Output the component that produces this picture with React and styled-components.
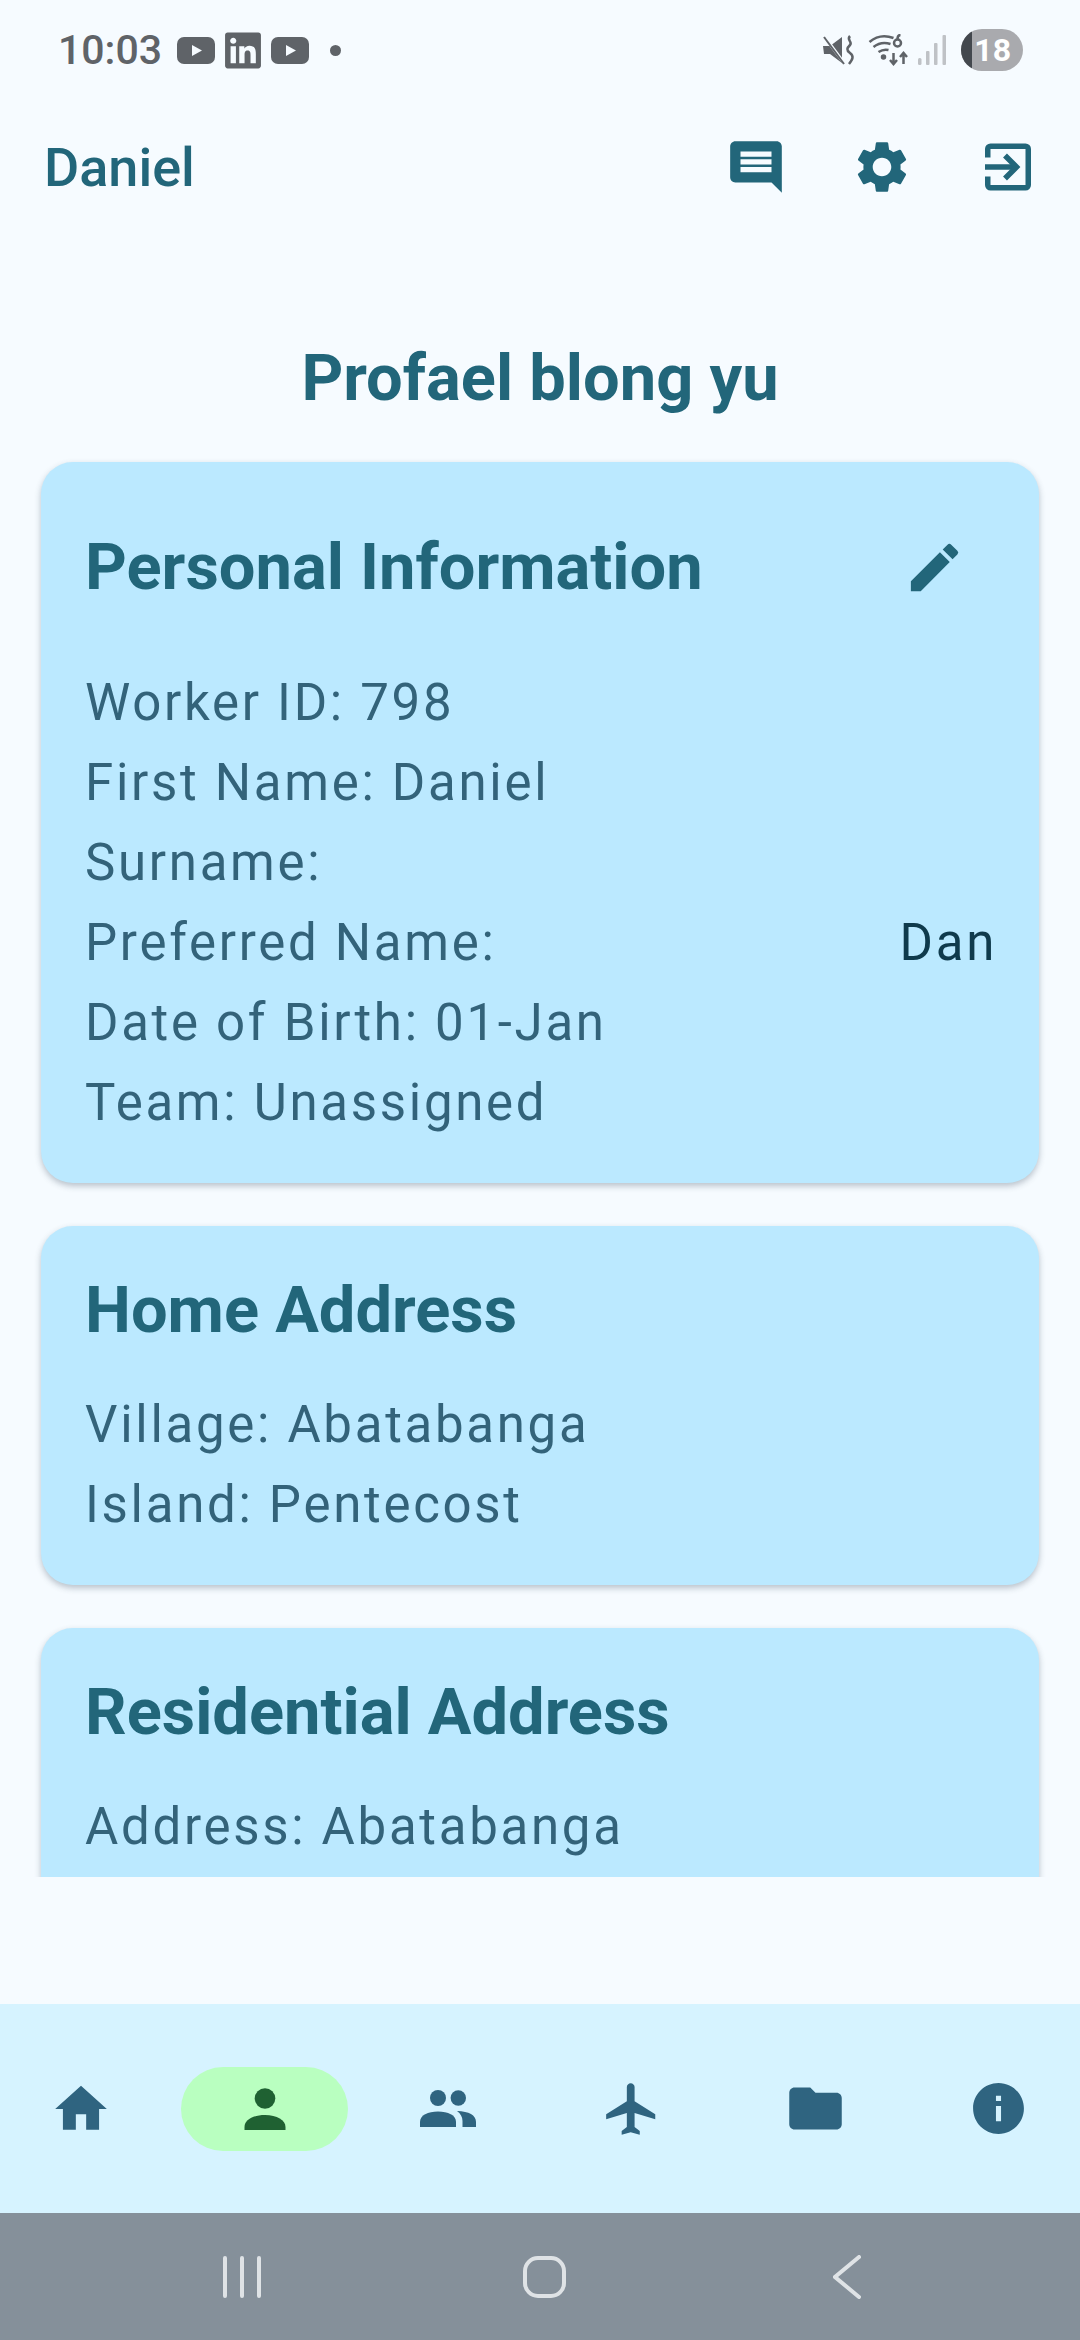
import styled, { createGlobalStyle } from "styled-components";
import { MdComment, MdSettings, MdEdit, MdHome, MdFlight, MdFolder, MdInfo } from "react-icons/md";
import { FaLinkedin } from "react-icons/fa";

const GlobalStyle = createGlobalStyle`
  html, body {
    margin: 0;
    padding: 0;
    background: #f6fbff;
    font-family: Roboto, "Liberation Sans", sans-serif;
  }
`;

const Page = styled.div`
  width: 1080px;
  height: 2340px;
  display: flex;
  flex-direction: column;
  background: #f6fbff;
  overflow: hidden;
`;

const StatusBar = styled.div`
  height: 100px;
  flex: none;
  display: flex;
  align-items: center;
  justify-content: space-between;
  padding: 0 57px 0 58px;
  color: #5f6368;
`;

const StatusGroup = styled.div`
  display: flex;
  align-items: center;
  gap: ${(p) => p.$gap}px;
`;

const Time = styled.span`
  font-size: 41px;
  font-weight: 500;
  margin-right: 5px;
`;

const LinkedinIcon = styled(FaLinkedin)`
  width: 36px;
  height: 41px;
`;

const Dot = styled.span`
  width: 11px;
  height: 11px;
  border-radius: 50%;
  background: #5f6368;
  margin-left: 11px;
`;

const Battery = styled.div`
  position: relative;
  width: 62px;
  height: 42px;
  margin-left: 6px;
  border-radius: 21px;
  overflow: hidden;
  background: #a9aaae;
  color: #fff;
  font-size: 32px;
  font-weight: 700;
  line-height: 42px;
  text-align: right;
  padding-right: 12px;
  box-sizing: border-box;
`;

const BatteryLevel = styled.span`
  position: absolute;
  left: 0;
  top: 0;
  bottom: 0;
  width: 11px;
  background: #43484e;
`;

const Header = styled.div`
  height: 134px;
  flex: none;
  display: flex;
  align-items: center;
  justify-content: space-between;
  padding: 0 41px 0 44px;
  color: #22667a;
`;

const UserName = styled.div`
  font-size: 54px;
  font-weight: 500;
`;

const HeaderActions = styled.div`
  display: flex;
  align-items: center;
  gap: 64px;
  & > svg {
    width: 62px;
    height: 62px;
  }
`;

const ExitIcon = styled.svg`
  fill: none;
  stroke: currentColor;
  stroke-width: 5.5;
`;

const PageTitle = styled.h1`
  height: 207px;
  flex: none;
  margin: 0;
  padding-top: 104px;
  box-sizing: border-box;
  text-align: center;
  color: #22667a;
  font-size: 65px;
  font-weight: 700;
  line-height: 80px;
`;

const ScrollArea = styled.div`
  height: 1436px;
  flex: none;
  overflow: hidden;
  padding: 21px 41px 0;
  box-sizing: border-box;
  display: flex;
  flex-direction: column;
  gap: 43px;
`;

const Card = styled.section`
  flex: none;
  background: #bbe9ff;
  border-radius: 32px;
  padding: 46px 42px 41px 44px;
  box-shadow: 0 3px 6px rgba(40, 60, 80, 0.3);
`;

const CardHeader = styled.div`
  display: flex;
  align-items: center;
  justify-content: space-between;
  margin-bottom: 36px;
`;

const CardTitle = styled.h2`
  margin: 0;
  color: #22667a;
  font-size: 65px;
  font-weight: 700;
  line-height: 76px;
`;

const EditButton = styled.button`
  width: 126px;
  height: 118px;
  border: 0;
  padding: 0;
  background: none;
  color: #22667a;
  display: flex;
  align-items: center;
  justify-content: center;
`;

const InfoRow = styled.div`
  height: 80px;
  display: flex;
  align-items: center;
  justify-content: space-between;
  color: #33637a;
  font-size: 51px;
  letter-spacing: 2.7px;
`;

const InfoValue = styled.span`
  color: #0f3a4c;
`;

const Spacer = styled.div`
  flex: 1;
`;

const BottomNav = styled.nav`
  height: 209px;
  flex: none;
  display: flex;
  align-items: center;
  justify-content: space-between;
  padding: 0 45px;
  background: #d6f3ff;
`;

const NavItem = styled.div`
  width: ${(p) => (p.$active ? 167 : 72)}px;
  height: 84px;
  margin: 0 ${(p) => (p.$active ? -47.5 : 0)}px;
  border-radius: 42px;
  flex: none;
  display: flex;
  align-items: center;
  justify-content: center;
  color: ${(p) => (p.$active ? "#1f6132" : "#2f6480")};
  background: ${(p) => (p.$active ? "#b9ffc0" : "transparent")};
`;

const SystemBar = styled.div`
  height: 127px;
  flex: none;
  display: flex;
  align-items: center;
  gap: 261px;
  padding: 0 219px 0 222px;
  background: #85909a;
  color: #dfe3e6;
  & > svg:last-child {
    margin-left: auto;
  }
`;

const YoutubeIcon = () => (
  <svg width="38" height="27" viewBox="0 0 38 27">
    <rect width="38" height="27" rx="7" fill="currentColor" />
    <path d="M15 8l10 5.500-10 5.500z" fill="#f6fbff" />
  </svg>
);

const MuteIcon = () => (
  <svg width="36" height="30" viewBox="0 0 36 30" fill="none">
    <path d="M0 11h7L19 2v26L7 19H1z" fill="currentColor" />
    <path d="M1 1l20 27" stroke="#f6fbff" strokeWidth="3" />
    <path d="M1 2l20 27" stroke="currentColor" strokeWidth="2" />
    <path d="M27 1c-4 4 3 6 0 9s-4 5 0 8 3 6-1 11" stroke="currentColor" strokeWidth="2.500" />
  </svg>
);

const WifiIcon = () => (
  <svg width="41" height="32" viewBox="0 0 40 32" fill="none" stroke="currentColor" strokeWidth="2.500">
    <path d="M1 8c7-6 16-7 24-4" />
    <path d="M5 13c5-4 11-5 17-3" />
    <path d="M10 18c3-2 6-3 10-2" />
    <circle cx="15" cy="23" r="1.500" fill="currentColor" />
    <circle cx="29" cy="9" r="3.500" />
    <path d="M29 5c0-3 1-4 3-4" />
    <path d="M25 19v11m-3.500-4l3.500 4 3.500-4" />
    <path d="M35 30V19m-3.500 4l3.500-4 3.500 4" />
  </svg>
);

const SignalIcon = () => (
  <svg width="28" height="30" viewBox="0 0 28 30" fill="#bfc2c6">
    <rect x="0" y="23" width="3.500" height="7" rx="1.500" />
    <rect x="8" y="16" width="3.500" height="14" rx="1" />
    <rect x="16" y="8" width="3.500" height="22" rx="1" />
    <rect x="24.500" y="0" width="3.500" height="30" rx="1" />
  </svg>
);

const ExitToBox = () => (
  <ExitIcon viewBox="-8 -7.500 62 62">
    <path d="M2.750 14V5.500a2.750 2.750 0 0 1 2.750-2.750H40.500a2.750 2.750 0 0 1 2.750 2.750V41.500a2.750 2.750 0 0 1-2.750 2.750H5.500a2.750 2.750 0 0 1-2.750-2.750V33" />
    <path d="M0 23.500H31" />
    <path d="M20 12l11.500 11.500L20 35" />
  </ExitIcon>
);

const PersonIcon = () => (
  <svg width="42" height="42" viewBox="0 0 42 42" fill="currentColor">
    <circle cx="21" cy="10.500" r="10.300" />
    <path d="M0.500 42v-3C0.500 32 9 27 21 27s20.500 5 20.500 12v3z" />
  </svg>
);

const PeopleIcon = () => (
  <svg width="58" height="37" viewBox="0 0 56 37" fill="currentColor">
    <circle cx="18" cy="8" r="8" />
    <circle cx="38.300" cy="8" r="7.700" />
    <path d="M0 37v-5c0-7 8-10.500 18-10.500S36 25 36 32v5z" />
    <path d="M37 21c12 .5 19 4 19 11v5H42.500v-6c0-4-2-7.500-5.500-10z" />
  </svg>
);

const RecentsIcon = () => (
  <svg width="40" height="42" viewBox="0 0 40 42" fill="none" stroke="currentColor" strokeWidth="4" strokeLinecap="round">
    <path d="M3 2v38M20 2v38M37 2v38" />
  </svg>
);

const HomeIcon = () => (
  <svg width="43" height="42" viewBox="0 0 43 42" fill="none" stroke="currentColor" strokeWidth="4">
    <rect x="2" y="2" width="39" height="38" rx="13" />
  </svg>
);

const BackIcon = () => (
  <svg width="28" height="44" viewBox="0 0 28 44" fill="none" stroke="currentColor" strokeWidth="4" strokeLinecap="round">
    <path d="M26 2L2 22l24 20" />
  </svg>
);

function App() {
  return (
    <>
      <GlobalStyle />
      <Page>
        <StatusBar>
          <StatusGroup $gap={10}>
            <Time>10:03</Time>
            <YoutubeIcon />
            <LinkedinIcon />
            <YoutubeIcon />
            <Dot />
          </StatusGroup>
          <StatusGroup $gap={9}>
            <MuteIcon />
            <WifiIcon />
            <SignalIcon />
            <Battery>
              <BatteryLevel />
              18
            </Battery>
          </StatusGroup>
        </StatusBar>

        <Header>
          <UserName>Daniel</UserName>
          <HeaderActions>
            <MdComment />
            <MdSettings />
            <ExitToBox />
          </HeaderActions>
        </Header>

        <PageTitle>Profael blong yu</PageTitle>

        <ScrollArea>
          <Card>
            <CardHeader>
              <CardTitle>Personal Information</CardTitle>
              <EditButton>
                <MdEdit size={63} />
              </EditButton>
            </CardHeader>
            <InfoRow>Worker ID: 798</InfoRow>
            <InfoRow>First Name: Daniel</InfoRow>
            <InfoRow>Surname:</InfoRow>
            <InfoRow>
              Preferred Name:
              <InfoValue>Dan</InfoValue>
            </InfoRow>
            <InfoRow>Date of Birth: 01-Jan</InfoRow>
            <InfoRow>Team: Unassigned</InfoRow>
          </Card>

          <Card>
            <CardHeader>
              <CardTitle>Home Address</CardTitle>
            </CardHeader>
            <InfoRow>Village: Abatabanga</InfoRow>
            <InfoRow>Island: Pentecost</InfoRow>
          </Card>

          <Card>
            <CardHeader>
              <CardTitle>Residential Address</CardTitle>
            </CardHeader>
            <InfoRow>Address: Abatabanga</InfoRow>
          </Card>
        </ScrollArea>

        <Spacer />

        <BottomNav>
          <NavItem>
            <MdHome size={62} />
          </NavItem>
          <NavItem $active>
            <PersonIcon />
          </NavItem>
          <NavItem>
            <PeopleIcon />
          </NavItem>
          <NavItem>
            <MdFlight size={62} />
          </NavItem>
          <NavItem>
            <MdFolder size={63} />
          </NavItem>
          <NavItem>
            <MdInfo size={61} />
          </NavItem>
        </BottomNav>

        <SystemBar>
          <RecentsIcon />
          <HomeIcon />
          <BackIcon />
        </SystemBar>
      </Page>
    </>
  );
}

export default App;
